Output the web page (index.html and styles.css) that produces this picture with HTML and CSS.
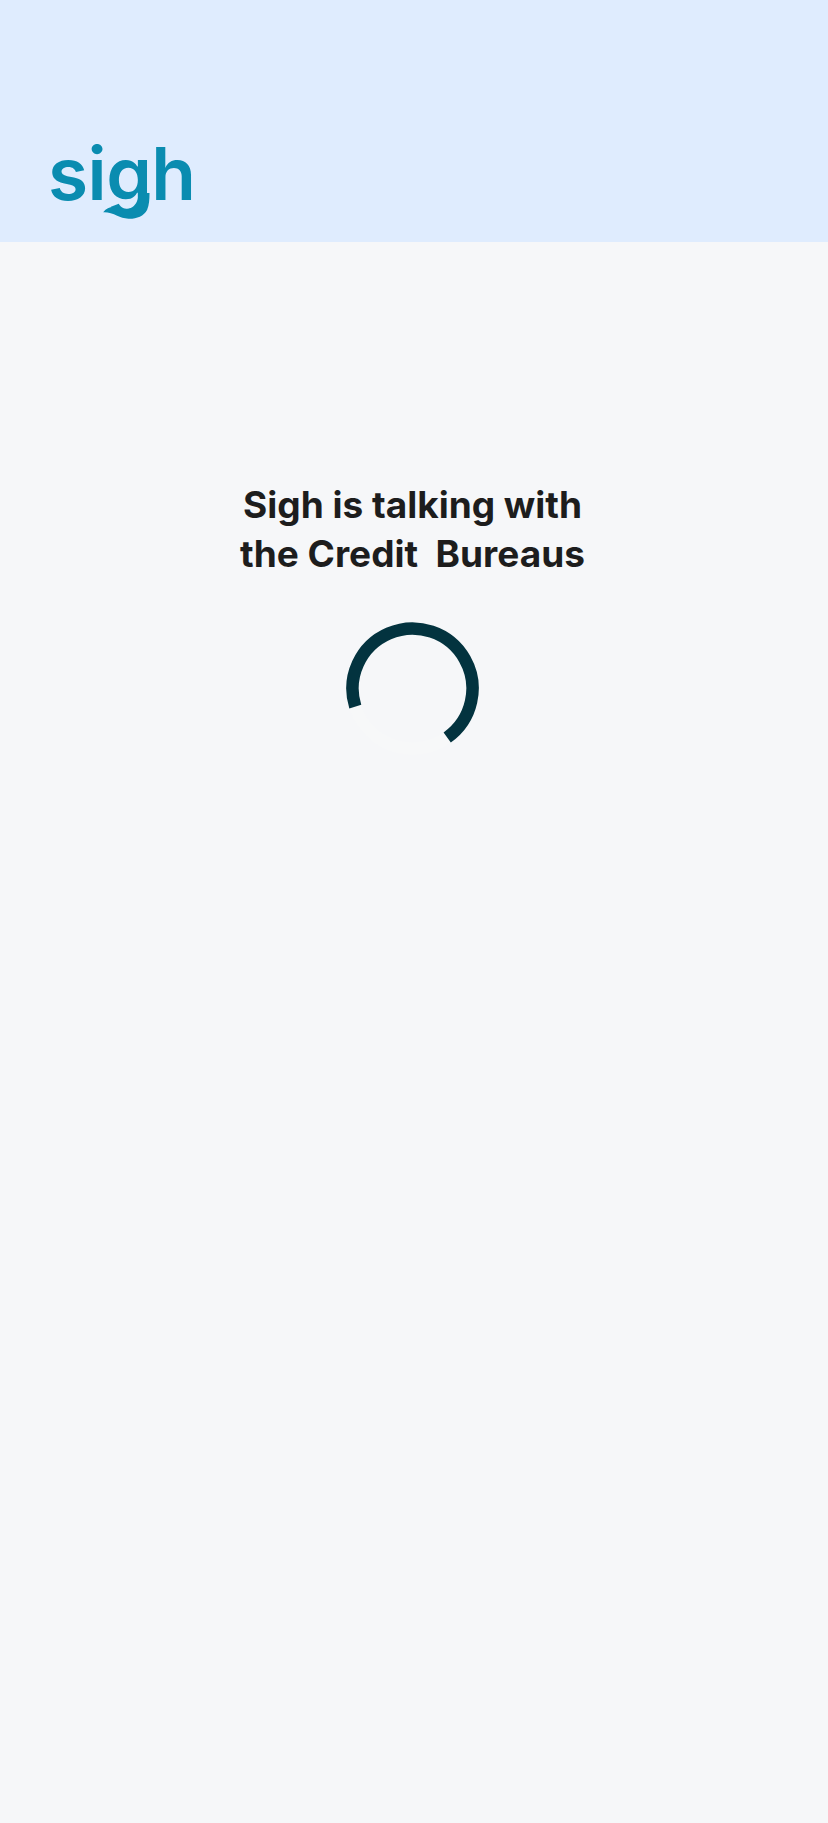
FILE: index.html

```html
<!DOCTYPE html>
<html lang="en">
<head>
    <meta charset="UTF-8">
    <meta name="viewport" content="width=device-width, initial-scale=1.0">
    <title>Sigh - Loading</title>
    <link rel="stylesheet" href="styles.css">
</head>
<body>
    <header class="top-banner">
        <div class="logo">
            <span class="logo-text">sigh</span>
            <svg class="logo-swoosh" viewBox="0 0 140 78" aria-hidden="true"><path d="M0 58 C9 46 19 42 30 42 C40 42 48 47 58 48 C70 49 80 47 88 42 C100 34 105 20 107 0 L139 0 C139 20 138 36 132 50 C122 70 98 78 76 77 C62 76 52 72 42 68 C28 62 14 57 0 58 Z"></path></svg>
        </div>
    </header>

    <main class="loading-screen">
        <h1 class="loading-title">Sigh is talking with<br>the Credit&nbsp; Bureaus</h1>
        <svg class="spinner" viewBox="0 0 133 133" role="img" aria-label="Loading">
            <circle class="spinner-track" cx="66.5" cy="66.5" r="60"></circle>
            <path class="spinner-arc" d="M9.3 84.6 A60 60 0 1 1 101.2 115.5"></path>
        </svg>
    </main>
</body>
</html>
```

FILE: styles.css

```css
:root {
    --banner-bg: #dfecfe;
    --page-bg: #f6f7f9;
    --logo-color: #0a8cb0;
    --text-color: #1d1d1d;
    --spinner-color: #03333f;
}
* { margin: 0; padding: 0; box-sizing: border-box; }
body { font-family: 'Inter', 'Liberation Sans', sans-serif; background-color: var(--page-bg); min-height: 100vh; }

.top-banner { height: 242px; background-color: var(--banner-bg); display: flex; align-items: flex-end; padding: 0 0 22px 48px; }
.logo { position: relative; height: 76px; width: 144px; color: var(--logo-color); }
.logo-text { display: block; font-size: 73px; font-weight: 600; line-height: 59px; letter-spacing: -0.5px; }
.logo-swoosh { position: absolute; left: 55px; top: 49px; width: 47px; height: 26px; fill: var(--logo-color); }

.loading-screen { display: flex; flex-direction: column; align-items: center; padding: 238px 3px 0 0; }
.loading-title { font-size: 37px; font-weight: 700; line-height: 49px; text-align: center; color: var(--text-color); margin-bottom: 44px; }
.spinner { width: 133px; height: 133px; display: block; }
.spinner-track, .spinner-arc { fill: none; stroke-width: 12.5; }
.spinner-track { stroke: #f7f8f9; }
.spinner-arc { stroke: var(--spinner-color); }
```
